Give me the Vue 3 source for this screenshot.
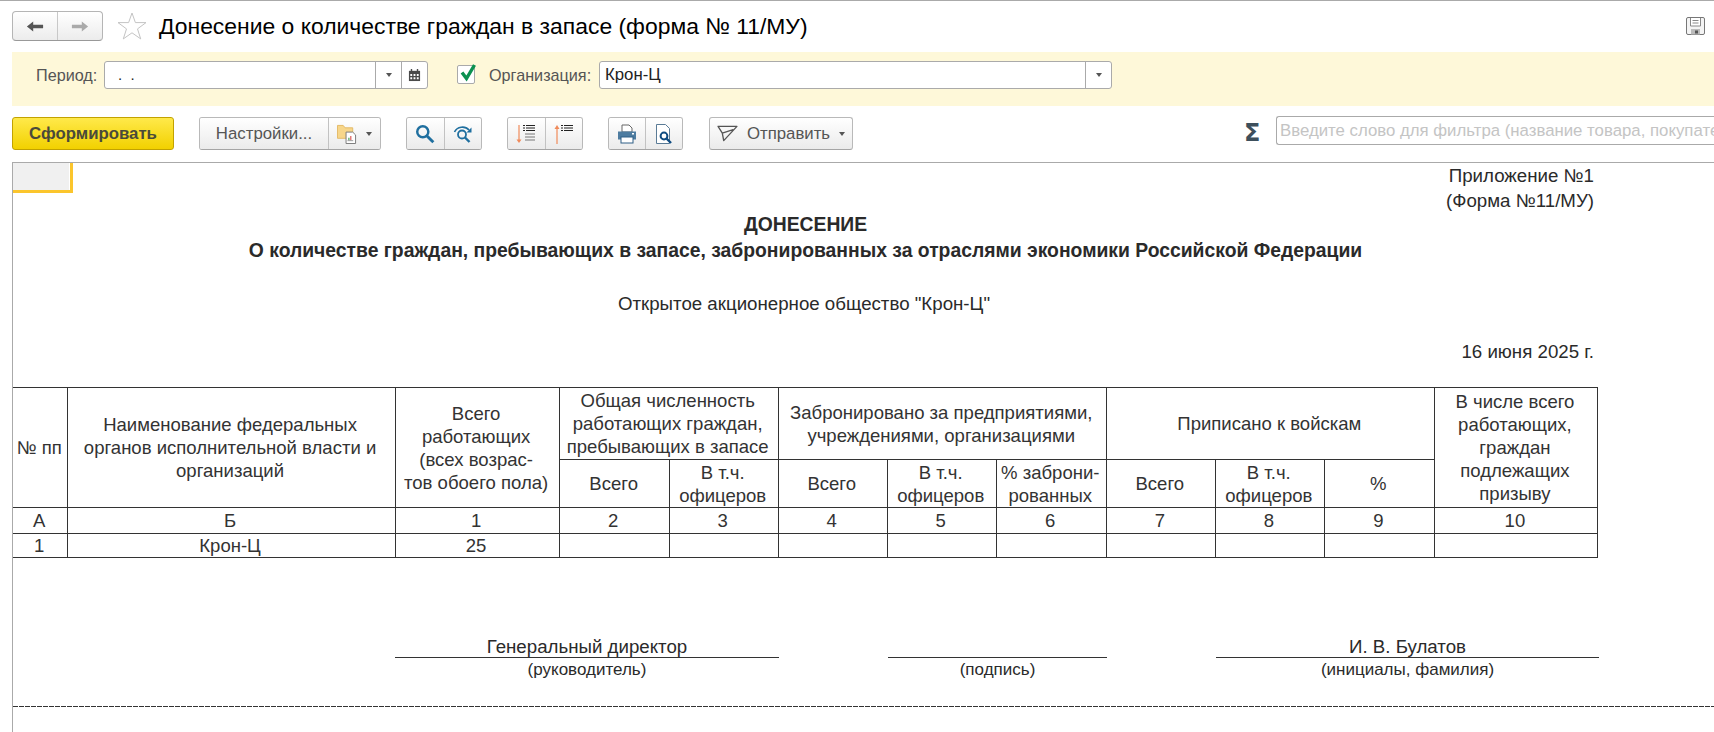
<template>
  <div class="page">
    <header class="head">
      <div class="nav-btns">
        <button class="nav-btn">
          <svg viewBox="0 0 20 14" class="arrow"><path d="M1 7l7-5.500V5h11v4H8v3.500z" fill="#555" /></svg>
        </button>
        <button class="nav-btn">
          <svg viewBox="0 0 20 14" class="arrow"><path d="M19 7l-7-5.500V5H1v4h11v3.500z" fill="#aaa" /></svg>
        </button>
      </div>
      <svg viewBox="0 0 30 28" class="star">
        <path d="M15 1l3.400 9.600H29l-8.500 6.300 3.200 10L15 20.800 6.300 26.900l3.200-10L1 10.600h10.600z" fill="none" stroke="#c4c4c4" stroke-width="1" />
      </svg>
      <h1 class="title">Донесение о количестве граждан в запасе (форма № 11/МУ)</h1>
      <svg viewBox="0 0 19 18" class="save">
        <path d="M2 .500h15a1.500 1.500 0 0 1 1.500 1.500v14a1.500 1.500 0 0 1-1.500 1.500H2A1.500 1.500 0 0 1 .500 16V2A1.500 1.500 0 0 1 2 .500z" fill="#f4f4f4" stroke="#777" />
        <path d="M4.500 1v8h10V1" fill="#fff" stroke="#888" />
        <path d="M6.500 3.500h6M6.500 6h6" stroke="#888" />
        <rect x="5" y="12" width="9" height="5.500" fill="#bbb" />
        <rect x="9" y="13.500" width="3" height="3" fill="#555" />
      </svg>
    </header>

    <section class="filters">
      <label class="flabel period-label">Период:</label>
      <div class="field period">
        <span class="field-text dots">.&nbsp;&nbsp;.</span>
        <span class="field-btn"><i class="caret"></i></span>
        <span class="field-btn cal">
          <svg viewBox="0 0 14 14" class="cal-icon">
            <path d="M1 2.500h12v11H1z" fill="#4a4a4a" />
            <path d="M3 .500h1.500v3H3zM9.500 .500H11v3H9.500z" fill="#4a4a4a" />
            <path d="M2.500 6h2v2h-2zM6 6h2v2H6zM9.500 6h2v2h-2zM2.500 9.500h2v2h-2zM6 9.500h2v2H6zM9.500 9.500h2v2h-2z" fill="#fff" />
          </svg>
        </span>
      </div>
      <span class="check">
        <svg viewBox="0 0 20 20" class="tick"><path d="M4 9.500l4.500 6L16.500 2" fill="none" stroke="#0c9150" stroke-width="3.400" /></svg>
      </span>
      <label class="flabel org-label">Организация:</label>
      <div class="field org">
        <span class="field-text">Крон-Ц</span>
        <span class="field-btn"><i class="caret"></i></span>
      </div>
    </section>

    <section class="toolbar">
      <button class="btn primary">Сформировать</button>
      <div class="group settings">
        <button class="btn seg settings-text">Настройки...</button>
        <button class="btn seg folder">
          <svg viewBox="0 0 21 21" class="ico">
            <path d="M.500 1.500h6l2 2.500h8v11H.500z" fill="#f7d68a" stroke="#e3b865" />
            <path d="M9.500 8.500h7l3 3v9h-10z" fill="#fff" stroke="#777" />
            <path d="M12.500 17v-2.500" stroke="#3a9a4a" stroke-width="1.200" />
            <path d="M14.500 17v-4.500" stroke="#d9534f" stroke-width="1.200" />
            <path d="M11 17.500h6" stroke="#999" />
          </svg>
          <i class="caret"></i>
        </button>
      </div>
      <div class="group search">
        <button class="btn seg ico-btn">
          <svg viewBox="0 0 18 18" class="ico">
            <circle cx="7" cy="7" r="5" fill="none" stroke="#1f6f9f" stroke-width="2.200" />
            <path d="M10.800 10.800l5.700 5.700" stroke="#1f6f9f" stroke-width="2.600" />
          </svg>
        </button>
        <button class="btn seg ico-btn">
          <svg viewBox="0 0 20 18" class="ico">
            <circle cx="9" cy="9.500" r="4" fill="none" stroke="#1f6f9f" stroke-width="1.800" />
            <path d="M12 12.500l4.500 4.500" stroke="#1f6f9f" stroke-width="2.400" />
            <path d="M1.500 7C4 1.500 12 .500 16 5" fill="none" stroke="#1f6f9f" stroke-width="1.600" />
            <path d="M18.500 2.500v5h-5z" fill="#1f6f9f" />
          </svg>
        </button>
      </div>
      <div class="group sort">
        <button class="btn seg ico-btn">
          <svg viewBox="0 0 20 20" class="ico">
            <path d="M3 1v16" stroke="#f08a5a" stroke-width="1.200" />
            <path d="M.500 15.500h5L3 19z" fill="#f08a5a" />
            <path d="M7 1.500h2M10 1.500h9M7 4h2M10 4h9M7 6.500h2M10 6.500h9" stroke="#222" stroke-width="1.200" />
            <path d="M9 10h10M9 13h10M9 16h10" stroke="#777" />
          </svg>
        </button>
        <button class="btn seg ico-btn">
          <svg viewBox="0 0 20 20" class="ico">
            <path d="M3 4v16" stroke="#f08a5a" stroke-width="1.200" />
            <path d="M.500 5h5L3 1z" fill="#f08a5a" />
            <path d="M7 1.500h2M10 1.500h9M7 4h2M10 4h9M7 6.500h2M10 6.500h9" stroke="#222" stroke-width="1.200" />
          </svg>
        </button>
      </div>
      <div class="group print">
        <button class="btn seg ico-btn">
          <svg viewBox="0 0 20 20" class="ico">
            <path d="M5 1h7l3 3v4H5z" fill="#fff" stroke="#666" />
            <path d="M1 7.500h18v8H1z" fill="#4d7ca0" />
            <rect x="4" y="13" width="12" height="6" fill="#fff" stroke="#2f5f86" />
            <rect x="15" y="9" width="2" height="1.500" fill="#fff" />
          </svg>
        </button>
        <button class="btn seg ico-btn">
          <svg viewBox="0 0 20 20" class="ico">
            <path d="M2.500 .500h9l4 4v15h-13z" fill="#fff" stroke="#5a7b96" />
            <circle cx="10" cy="12" r="3.400" fill="none" stroke="#0f4c81" stroke-width="2" />
            <path d="M12.500 14.500l4.500 4.500" stroke="#0f4c81" stroke-width="2.400" />
          </svg>
        </button>
      </div>
      <button class="btn send">
        <svg viewBox="0 0 22 18" class="plane">
          <path d="M1 1.500h20L7 16.500 5.500 8.500zM5.500 8.500L17 5" fill="none" stroke="#555" stroke-width="1.400" stroke-linejoin="round" />
        </svg>
        <span>Отправить</span>
        <i class="caret"></i>
      </button>
      <span class="sigma">Σ</span>
      <div class="filter-input">Введите слово для фильтра (название товара, покупателя)</div>
    </section>

    <main class="report">
      <div class="corner"></div>
      <div class="sheet">
        <div class="annex">
          <div>Приложение №1</div>
          <div>(Форма №11/МУ)</div>
        </div>
        <div class="doc-title">
          <div>ДОНЕСЕНИЕ</div>
          <div>О количестве граждан, пребывающих в запасе, забронированных за отраслями экономики Российской Федерации</div>
        </div>
        <div class="company">Открытое акционерное общество "Крон-Ц"</div>
        <div class="doc-date">16 июня 2025 г.</div>

        <table class="grid">
          <colgroup>
            <col v-for="(w, i) in colWidths" :key="i" :style="{ width: w + 'px' }" />
          </colgroup>
          <tbody>
            <tr class="r1">
              <td rowspan="2">№ пп</td>
              <td rowspan="2">Наименование федеральных органов исполнительной власти и организаций</td>
              <td rowspan="2">Всего<br />работающих<br />(всех возрас-<br />тов обоего пола)</td>
              <td colspan="2">Общая численность работающих граждан, пребывающих в запасе</td>
              <td colspan="3">Забронировано за предприятиями, учреждениями, организациями</td>
              <td colspan="3">Приписано к войскам</td>
              <td rowspan="2">В числе всего работающих, граждан подлежащих призыву</td>
            </tr>
            <tr class="r2">
              <td>Всего</td>
              <td>В т.ч. офицеров</td>
              <td>Всего</td>
              <td>В т.ч. офицеров</td>
              <td>% заброни-<br />рованных</td>
              <td>Всего</td>
              <td>В т.ч. офицеров</td>
              <td>%</td>
            </tr>
            <tr class="r3">
              <td v-for="c in numbers" :key="c">{{ c }}</td>
            </tr>
            <tr class="r4">
              <td>1</td>
              <td>Крон-Ц</td>
              <td>25</td>
              <td v-for="n in 9" :key="n"></td>
            </tr>
          </tbody>
        </table>

        <div class="signs">
          <div class="sign s1">
            <div class="sign-val">Генеральный директор</div>
            <div class="sign-cap">(руководитель)</div>
          </div>
          <div class="sign s2">
            <div class="sign-val"></div>
            <div class="sign-cap">(подпись)</div>
          </div>
          <div class="sign s3">
            <div class="sign-val">И. В. Булатов</div>
            <div class="sign-cap">(инициалы, фамилия)</div>
          </div>
        </div>
        <div class="cut"></div>
      </div>
    </main>
  </div>
</template>

<script setup>
const colWidths = [54, 328, 164, 110, 109, 109, 109, 110, 109, 109, 110, 163]
const numbers = ['А', 'Б', '1', '2', '3', '4', '5', '6', '7', '8', '9', '10']
</script>

<style>
html,
body {
  margin: 0;
  background: #fff;
  overflow: hidden;
}
</style>

<style scoped>
.page {
  width: 1714px;
  height: 732px;
  overflow: hidden;
  font-family: "Liberation Sans", Arial, sans-serif;
  color: #333;
  border-top: 1px solid #aaa;
  box-sizing: border-box;
  display: flex;
  flex-direction: column;
}

.head {
  height: 51px;
  display: flex;
  align-items: flex-start;
  padding: 10px 9px 0 12px;
  box-sizing: border-box;
  flex: none;
}

.nav-btns {
  display: flex;
  width: 91px;
  height: 30px;
  border: 1px solid #b5b5b5;
  border-bottom-color: #999;
  border-radius: 4px;
  box-sizing: border-box;
  background: linear-gradient(#fff, #ececec);
  overflow: hidden;
}

.nav-btn {
  flex: 1;
  border: 0;
  padding: 0;
  background: none;
  display: flex;
  align-items: center;
  justify-content: center;
}

.nav-btn + .nav-btn {
  border-left: 1px solid #c8c8c8;
}

.arrow {
  width: 18px;
  height: 13px;
}

.star {
  width: 30px;
  height: 28px;
  margin: 1px 12px 0 14px;
  flex: none;
}

.title {
  margin: 0;
  font-size: 22.9px;
  font-weight: 400;
  line-height: 30px;
  color: #000;
  flex: 1;
  white-space: nowrap;
}

.save {
  width: 19px;
  height: 18px;
  margin-top: 6px;
  flex: none;
}

.filters {
  margin-left: 12px;
  height: 54px;
  background: #fef8d9;
  display: flex;
  align-items: flex-start;
  padding-top: 9px;
  box-sizing: border-box;
  flex: none;
}

.flabel {
  font-size: 16.2px;
  color: #555;
  line-height: 28px;
  white-space: nowrap;
}

.period-label {
  margin-left: 24px;
  width: 68px;
}

.field {
  height: 28px;
  border: 1px solid #aaa;
  border-radius: 3px;
  background: #fff;
  display: flex;
  box-sizing: border-box;
}

.period {
  width: 324px;
}

.org {
  width: 513px;
}

.field-text {
  flex: 1;
  font-size: 16.8px;
  line-height: 26px;
  padding-left: 5px;
  color: #222;
}

.dots {
  padding-left: 13px;
  font-size: 15px;
}

.field-btn {
  width: 25px;
  border-left: 1px solid #aaa;
  display: flex;
  align-items: center;
  justify-content: center;
}

.caret {
  display: inline-block;
  width: 0;
  height: 0;
  border: 3px solid transparent;
  border-top: 4px solid #555;
  border-bottom: 0;
}

.cal-icon {
  width: 13px;
  height: 14px;
}

.check {
  width: 18px;
  height: 19px;
  margin: 4px 0 0 29px;
  border: 1px solid #aaa;
  border-radius: 2px;
  background: #fff;
  box-sizing: border-box;
  position: relative;
}

.tick {
  position: absolute;
  left: 0;
  top: -3px;
  width: 20px;
  height: 20px;
}

.org-label {
  margin-left: 14px;
  width: 110px;
}

.toolbar {
  height: 56px;
  display: flex;
  align-items: flex-start;
  padding: 11px 0 0 12px;
  box-sizing: border-box;
  flex: none;
}

.btn {
  height: 33px;
  border: 1px solid #b9b9b9;
  border-bottom-color: #a5a5a5;
  border-radius: 3px;
  background: linear-gradient(#fff, #ebebeb);
  font-family: inherit;
  font-size: 16.8px;
  color: #555;
  padding: 0;
  box-sizing: border-box;
  white-space: nowrap;
}

.primary {
  width: 162px;
  background: linear-gradient(#ffe94a, #f2d100);
  border-color: #c2a200;
  font-weight: 700;
  color: #4a4a3a;
}

.group {
  display: flex;
  border: 1px solid #b9b9b9;
  border-bottom-color: #a5a5a5;
  border-radius: 3px;
  height: 33px;
  box-sizing: border-box;
  overflow: hidden;
}

.seg {
  border: 0;
  border-radius: 0;
  height: 31px;
  display: flex;
  align-items: center;
  justify-content: center;
}

.seg + .seg {
  border-left: 1px solid #c2c2c2;
}

.settings {
  margin-left: 25px;
  width: 182px;
}

.settings-text {
  width: 128px;
}

.folder {
  width: 52px;
  gap: 9px;
}

.ico {
  width: 20px;
  height: 20px;
}

.ico-btn {
  flex: 1;
}

.search {
  margin-left: 25px;
  width: 76px;
}

.sort {
  margin-left: 25px;
  width: 76px;
}

.print {
  margin-left: 25px;
  width: 75px;
}

.send {
  margin-left: 26px;
  width: 144px;
  display: flex;
  align-items: center;
  justify-content: center;
  gap: 9px;
}

.plane {
  width: 21px;
  height: 17px;
}

.sigma {
  margin: 3px 0 0 391px;
  width: 32px;
  font-size: 24px;
  font-weight: 700;
  color: #3d4f5c;
  line-height: 26px;
  font-family: "DejaVu Sans", sans-serif;
}

.filter-input {
  flex: 1;
  min-width: 0;
  margin-top: -1px;
  height: 29px;
  border: 1px solid #aaa;
  border-right: 0;
  border-radius: 3px 0 0 3px;
  font-size: 16.8px;
  line-height: 27px;
  padding-left: 3px;
  color: #c4c4c4;
  white-space: nowrap;
  overflow: hidden;
  box-sizing: border-box;
}

.report {
  margin-left: 12px;
  flex: 1;
  border-top: 1px solid #aaa;
  border-left: 1px solid #aaa;
  position: relative;
  min-height: 0;
}

.corner {
  position: absolute;
  left: 0;
  top: 0;
  width: 57px;
  height: 27px;
  background: #f0f0f0;
  border-right: 3px solid #fbc52c;
  border-bottom: 3px solid #fbc52c;
  box-shadow: inset -1px 0 0 #fff;
}

.sheet {
  font-size: 18.7px;
  color: #2a2a2a;
}

.annex {
  width: 1581px;
  text-align: right;
  line-height: 25px;
}

.doc-title {
  width: 1585px;
  text-align: center;
  font-weight: 700;
  font-size: 19.33px;
  line-height: 26px;
  margin-top: -1px;
}

.company {
  width: 1582px;
  text-align: center;
  margin-top: 27px;
  line-height: 25px;
}

.doc-date {
  width: 1581px;
  text-align: right;
  margin-top: 23px;
  line-height: 25px;
}

.grid {
  border-collapse: collapse;
  table-layout: fixed;
  width: 1585px;
  margin-top: 23px;
  color: #333;
  font-size: 18.55px;
}

.grid td {
  border: 1px solid #333;
  padding: 0 3px 0 1px;
  text-align: center;
  vertical-align: middle;
  line-height: 23px;
  box-sizing: border-box;
}

.grid tr td:first-child {
  border-left: 0;
  padding: 0 1px 0 0;
}

.r1 td {
  height: 72px;
}

.r2 td {
  height: 48px;
}

.r3 td {
  height: 26px;
}

.r4 td {
  height: 24px;
}

.signs {
  display: grid;
  grid-template-columns: 382px 384px 109px 219px 109px 383px;
  margin-top: 76px;
  width: 1586px;
}

.sign-val {
  height: 24px;
  line-height: 25px;
  border-bottom: 1px solid #333;
  text-align: center;
  box-sizing: border-box;
}

.sign-cap {
  font-size: 17px;
  line-height: 24px;
  text-align: center;
}

.s1 {
  grid-column: 2;
}

.s2 {
  grid-column: 4;
}

.s3 {
  grid-column: 6;
}

.cut {
  margin-top: 24px;
  height: 1px;
  background: repeating-linear-gradient(90deg, #333 0 5px, transparent 5px 6px);
}
</style>
